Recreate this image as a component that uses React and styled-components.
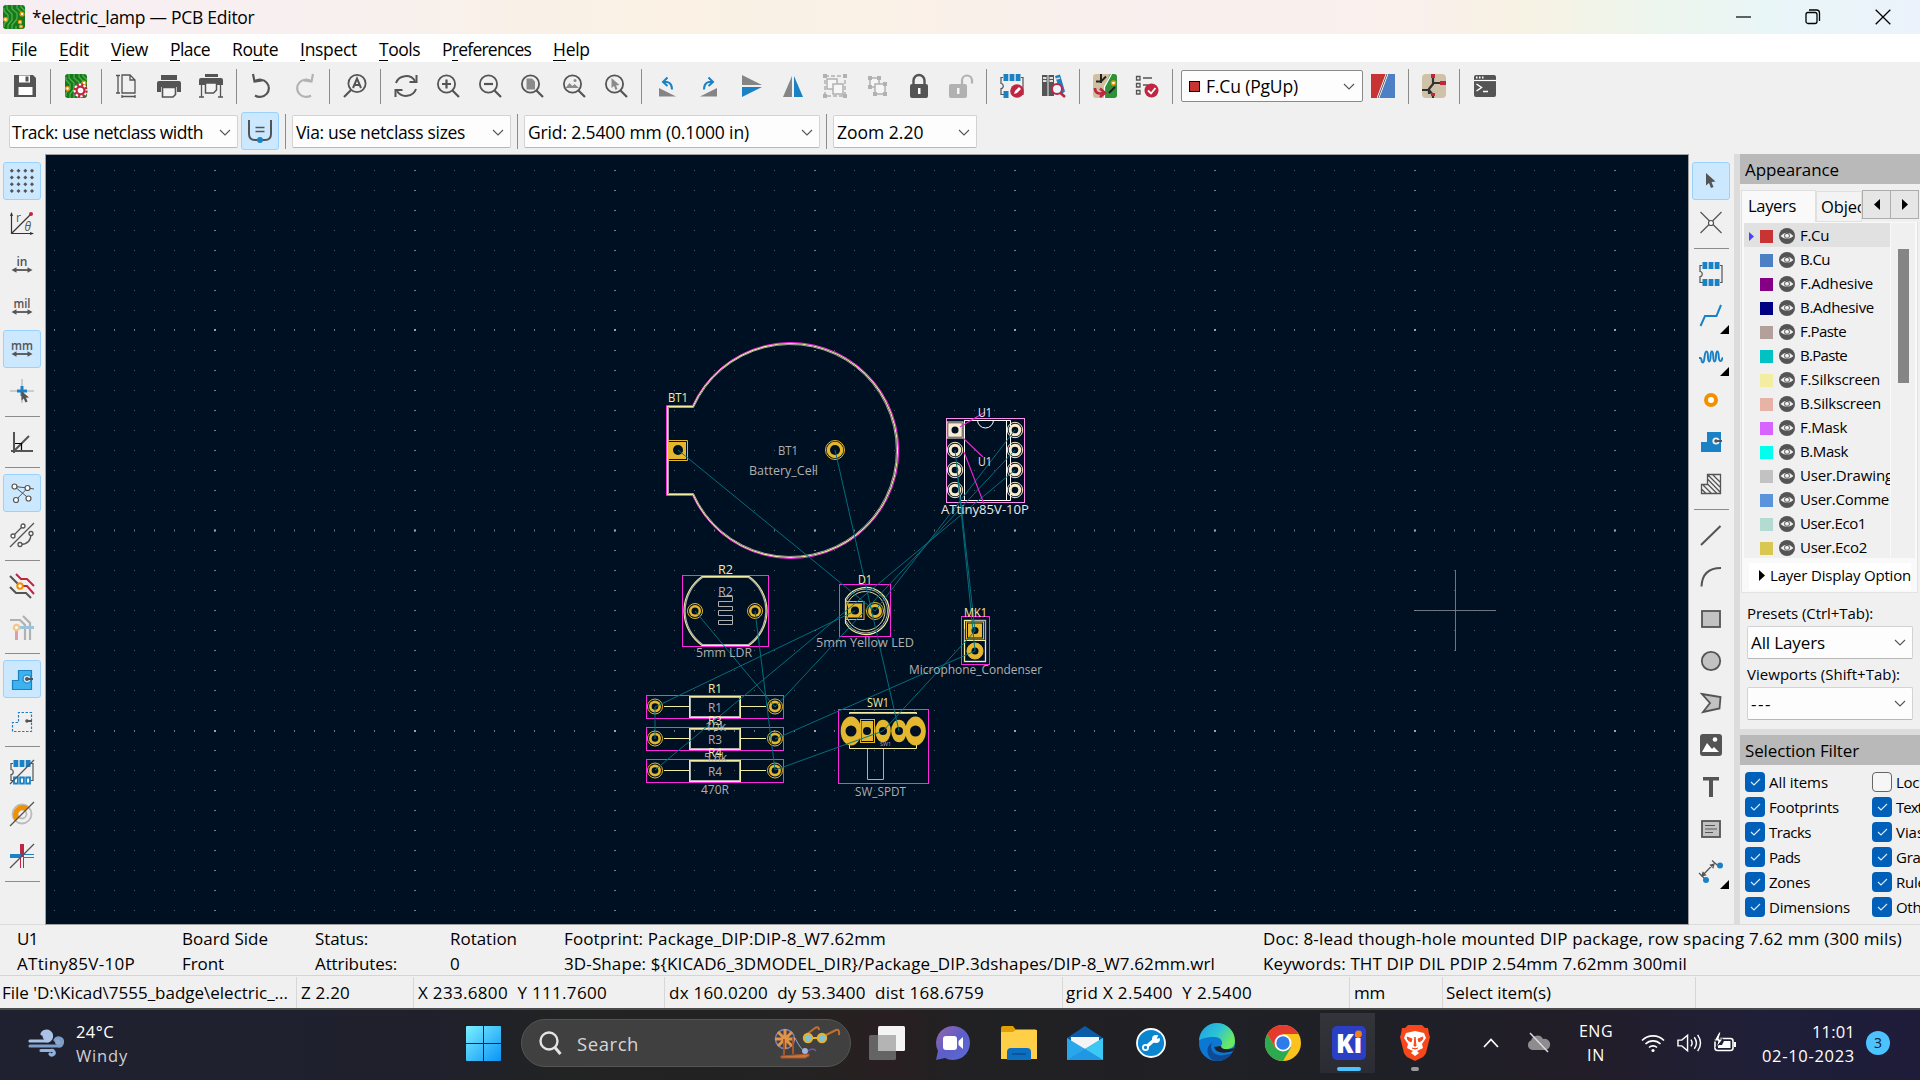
import React from "react";
import styled, { createGlobalStyle, css } from "styled-components";

const FONT = '"Open Sans", "Noto Sans", sans-serif';
const G = "#545454";
const B = "#1a81c4";
const R = "#bf2641";
const O = "#f29100";

const Global = createGlobalStyle`
  *, *::before, *::after { box-sizing: border-box; }
  body { margin: 0; overflow: hidden; background: #f0f0f0; font-family: ${FONT}; color: #000; }
  svg { flex: none; overflow: visible; }
`;

/* ---------- text fitted to a nominal width ---------- */
let ctx = null;
const spacingFor = (text, size, width) => {
  if (!width) return 0;
  if (!ctx) ctx = document.createElement("canvas").getContext("2d");
  ctx.font = `${size}px "Open Sans"`;
  return (width - ctx.measureText(text).width) / text.length;
};
const TextSpan = styled.span`
  font-size: ${(p) => p.$size}px;
  color: ${(p) => p.$color || "#000"};
  line-height: 1.3;
  white-space: pre;
  flex: none;
  u { text-decoration: none; box-shadow: 0 1px 0 currentColor; display: inline-block; line-height: 1.12; }
`;
const Text = ({ children, size = 17.5, w, color, mn }) => {
  const ls = spacingFor(children, size, w);
  return (
    <TextSpan $size={size} $color={color} style={{ letterSpacing: `${ls.toFixed(3)}px` }}>
      {mn === undefined ? children : (
        <>{children.slice(0, mn)}<u>{children[mn]}</u>{children.slice(mn + 1)}</>
      )}
    </TextSpan>
  );
};

/* ---------- frame ---------- */
const Screen = styled.div`
  width: 1920px; height: 1080px; display: flex; flex-direction: column; overflow: hidden;
`;
const TitleBar = styled.header`
  height: 34px; display: flex; align-items: center; flex: none;
  background: linear-gradient(90deg, #f6eef3 0, #f8f0ef 330px, #faf2e4 640px, #faf1e8 900px, #f9efee 1140px, #faf0ec 1420px, #f8f2e3 1510px, #edf5ec 1650px, #e9f6f8 1780px, #ebf2fb 1920px);
`;
const AppBadge = styled.div`width: 24px; height: 24px; margin: 0 6px 0 2px; display: flex;`;
const Caption = styled.div`flex: 1; display: flex;`;
const WindowButtons = styled.div`display: flex; margin-right: 2px;`;
const WindowButton = styled.div`width: 70px; height: 34px; display: grid; place-items: center;`;
const MenuBar = styled.nav`
  height: 28px; background: #fff; display: flex; align-items: center; gap: 22px; padding: 3px 0 0 11px; flex: none;
`;
const TopTools = styled.div`
  height: 48px; flex: none; display: flex; align-items: center; gap: 4px; padding-left: 6px;
`;
const SecondTools = styled.div`
  height: 44px; flex: none; display: flex; align-items: center; padding: 0 0 1px 9px;
`;
const WidthToggle = styled.div`margin: 0 4px 1px 3px; display: flex;`;
const ToolButton = styled.div`
  width: 38px; height: 38px; flex: none; display: grid; place-items: center; position: relative;
  border-radius: 3px; border: 1px solid transparent;
  & > svg { opacity: ${(p) => (p.$off ? 0.4 : 1)}; }
  ${(p) => p.$on && css`background: #cce8ff; border-color: #99d1ff;`}
  ${(p) => p.$more && css`&::after { content: ""; position: absolute; right: 0; bottom: 0;
    border-left: 9px solid transparent; border-bottom: 9px solid #000; }`}
`;
const Rule = styled.div`
  flex: none; display: grid; place-items: center;
  ${(p) => (p.$h ? "width: 35px; height: 5px;" : "width: 5px; height: 35px;")}
  &::after { content: ""; background: #8c8c8c; ${(p) => (p.$h ? "width: 35px; height: 1px;" : "width: 1px; height: 35px;")} }
`;
const Combo = styled.div`
  width: ${(p) => p.$w}px; height: ${(p) => p.$hgt || 33}px; margin: ${(p) => p.$m || "0"};
  flex: none; display: flex; align-items: center; justify-content: space-between;
  padding: ${(p) => p.$pt || 1}px ${(p) => p.$pr || 6}px 0 ${(p) => p.$pl || 3}px; background: #fdfdfd;
  border: 1px solid ${(p) => (p.$dark ? "#8a8a8a" : "#d3d3d3")};
  border-bottom-color: ${(p) => (p.$dark ? "#8a8a8a" : "#b8b8b8")}; border-radius: 2px;
`;
const ComboValue = styled.span`display: flex; align-items: center; gap: 7px; &>i { width: 9px; height: 9px; background: #c83434; outline: 1px solid #000; }`;
const Chevron = () => (
  <svg width="12" height="8" viewBox="0 0 12 8"><path d="M1 1l5 5 5-5" fill="none" stroke="#555" strokeWidth="1.1" /></svg>
);
const Main = styled.main`height: 771px; flex: none; display: flex;`;
const LeftTools = styled.aside`
  width: 45px; padding: 8px 1px 0 0; display: flex; flex-direction: column; align-items: center; gap: 4px;
  border-bottom: 1px solid #dcdcdc;
`;
const CanvasFrame = styled.section`width: 1644px; border: 1px solid #a0a0a0; background: #001023; & > svg { display: block; overflow: hidden; }`;
const Sash = styled.div`width: 6px; background: #dcdcdc;`;
const SidePanel = styled.aside`width: 180px; overflow: hidden; display: flex; flex-direction: column;`;
const PanelTitle = styled.div`
  height: 30px; flex: none; background: #b9b9b9; display: flex; align-items: center; padding: 2px 0 0 5px;
`;
const TabRow = styled.div`height: 38px; flex: none; display: flex; align-items: flex-start; padding: 6px 0 0 1px;`;
const Tab = styled.div`
  height: ${(p) => (p.$on ? 32 : 31)}px; margin-top: ${(p) => (p.$on ? 0 : 1)}px; width: ${(p) => p.$w}px;
  background: ${(p) => (p.$on ? "#f9f9f9" : "#f3f3f3")}; border: 1px solid #e0e0e0; border-bottom: ${(p) => (p.$on ? "none" : "1px solid #e0e0e0")};
  overflow: hidden; display: flex; align-items: center; padding: 0 0 ${(p) => (p.$on ? 1 : 0)}px ${(p) => (p.$on ? 6 : 4)}px;
`;
const TabArrow = styled.div`
  width: 29px; height: 29px; margin: 0 -1px 0 0; border: 1px solid #adadad; background: #e6e6e6; display: grid; place-items: center;
`;
const Page = styled.div`
  height: 371px; width: 177px; margin-left: 1px; flex: none; border: 1px solid #e3e3e3; border-top: 0; background: #f9f9f9; padding: 1px 2px 0 2px;
`;
const LayerArea = styled.div`display: flex; height: 335px; overflow: hidden; gap: 1px;`;
const LayerList = styled.div`width: 146px; background: #f0f0f0; overflow: hidden; flex: none;`;
const LayerRow = styled.div`
  height: 24px; display: grid; grid-template-columns: 16px 19px 21px auto; align-items: center; white-space: pre; padding-top: 2px;
  background: ${(p) => (p.$on ? "#e1e1e1" : "transparent")};
`;
const RowArrow = styled.svg`display: block; width: 16px; height: 9px;`;
const Swatch = styled.i`width: 13px; height: 13px; background: ${(p) => p.$c};`;
const ScrollTrack = styled.div`flex: 1; background: #f0f0f0; padding: 26px 0 0 7px;`;
const ScrollThumb = styled.div`width: 11px; height: 134px; background: #858585;`;
const DisplayOptions = styled.div`
  width: 162px; height: 27px; margin: 5px 0 0 5px; background: #fff; overflow: hidden; display: flex; align-items: center; padding: 0 0 2px 10px; gap: 5px;
`;
const FieldLabel = styled.div`height: ${(p) => p.$hgt}px; flex: none; display: flex; align-items: flex-end; padding: 0 0 1px 7px;`;
const PanelSash = styled.div`height: 6px; margin-top: 9px; flex: none; background: #dcdcdc;`;
const Filters = styled.div`
  display: grid; grid-template-columns: 127px 127px; grid-auto-rows: 25px; padding: 7px 0 0 5px; flex: 1; overflow: hidden; border-bottom: 1px solid #dcdcdc;
`;
const Check = styled.label`display: flex; align-items: flex-start; gap: 4px; height: 25px; & > span { margin-top: 1px; }`;
const Box = styled.i`
  width: 20px; height: 20px; border-radius: 4px; flex: none; display: grid; place-items: center;
  ${(p) => (p.$on ? "background: #005fb8;" : "background: #f6f6f6; border: 1px solid #666;")}
`;
const MessagePanel = styled.section`
  height: 51px; flex: none; display: grid; padding: 2px 0 0 17px; border-bottom: 1px solid #d5d5d5;
  grid-template-columns: 165px 133px 135px 114px 699px auto; grid-template-rows: 25px 25px; align-items: center;
`;
const StatusBar = styled.footer`height: 32px; flex: none; display: flex; padding-top: 1px;`;
const StatusCell = styled.div`
  width: ${(p) => p.$w}px; padding: 2px 0 0 ${(p) => p.$pl || 4}px; border-right: 1px solid #d7d7d7; display: flex; align-items: center;
`;

/* ---------- task bar ---------- */
const TaskBar = styled.footer`
  height: 72px; flex: none; display: flex; align-items: center; border-top: 2px solid #4a4a4b; padding-bottom: 4px;
  background: linear-gradient(90deg, #1f2130 0, #1f202c 430px, #222323 560px, #242222 800px, #281f21 890px, #212123 960px, #1f2027 1400px, #221d28 1580px, #1f1f38 1760px, #1e1c3a 1920px);
`;
const Weather = styled.div`width: 466px; display: flex; align-items: center; gap: 12px; padding-left: 28px;`;
const Stack = styled.div`display: flex; flex-direction: column; align-items: ${(p) => p.$a || "flex-start"}; gap: ${(p) => p.$gap || 2.5}px; padding-top: 1px;`;
const SearchBox = styled.div`
  width: 330px; height: 48px; margin: 0 3px 0 20px; border-radius: 24px; background: #404041; border: 1px solid #555;
  display: flex; align-items: center; padding: 0 9px 0 16px; gap: 16px;
`;
const SearchLabel = styled.div`flex: 1; display: flex; padding: 2px 0 0 0; margin-left: -1px;`;
const TaskCell = styled.div`width: 66px; height: 60px; display: grid; place-items: center; position: relative;
  ${(p) => p.$on && css`background: linear-gradient(#34343b, #2b2c33) 4px 0 / 55px 60px no-repeat; border-radius: 6px;`}
  ${(p) => p.$mark && css`&::after { content: ""; position: absolute; bottom: 2px; left: 50%; transform: translateX(-50%);
    width: ${p.$mark === "wide" ? 24 : 8}px; height: 4px; border-radius: 2px; background: ${p.$mark === "wide" ? "#4cc2ff" : "#9a9a9c"}; }`}
`;
const Tray = styled.div`display: flex; align-items: center; padding-left: 19px;`;
const TrayCell = styled.div`width: ${(p) => p.$w}px; display: flex; justify-content: ${(p) => p.$j || "center"};`;
const Badge = styled.div`
  width: 24px; height: 24px; margin-left: 11px; border-radius: 50%; background: #4cc2ff; display: grid; place-items: center;
`;

/* ---------- icons ---------- */
const Ic = ({ children, s = 24, ...rest }) => (
  <svg width={s} height={s} viewBox="0 0 24 24" fill="none" stroke={G} strokeWidth="1.8" {...rest}>{children}</svg>
);
const Board = ({ gear }) => (
  <Ic stroke="none">
    <rect x="1" width="22" height="24" rx="3" fill="#157a1c" />
    <g stroke="#4fb04b" strokeWidth="1.3" fill="none">
      <path d="M2 22v-3l4-4v-5l-4-4V3M6 24v-4l4-5V9L5 4V0M10 24v-4l5-6V8l-5-4V0M14 24v-3M15 0v3l5 5M19 0v2l4 4" />
    </g>
    <g fill="#fff" stroke={O} strokeWidth="1.4"><circle cx="3.500" cy="14.500" r="1.900" /><circle cx="20" cy="9" r="1.900" />{!gear && <><circle cx="18" cy="17" r="1.600" /><circle cx="19" cy="21.500" r="1.400" /></>}</g>
    {gear && (
      <g>
        <circle cx="16.500" cy="16.500" r="6.200" fill="#fff" stroke="#fff" />
        <circle cx="16.500" cy="16.500" r="6" fill="none" stroke={R} strokeWidth="2.400" strokeDasharray="2.356" />
        <circle cx="16.500" cy="16.500" r="3.900" fill="#fff" stroke={R} strokeWidth="2.200" />
      </g>
    )}
  </Ic>
);
const Lens = ({ children }) => (
  <Ic><circle cx="10.500" cy="10" r="8.600" /><path d="M16.500 16.500L23 23" strokeWidth="2.200" />{children}</Ic>
);
const Chip = ({ children }) => (
  <Ic>
    <path d="M3 3.500H1v6c3 0 3 5 0 5v6h3M21 3.500h2v17h-2" strokeWidth="1.200" />
    <g fill={B} stroke="none"><path d="M3.500 0h4.800v7H3.500zM9.600 0h4.800v7H9.600zM15.700 0h4.800v7h-4.800z" />{children}</g>
  </Ic>
);
const Pins = () => <path d="M3.500 17h4.800v7H3.500zM9.600 17h4.800v7H9.600zM15.700 17h4.800v7h-4.800z" />;
const UnitIcon = ({ t, w }) => (
  <Ic stroke="none">
    <text x="12" y="12.500" fill={G} fontFamily="Open Sans" fontSize="13" fontWeight="600" textAnchor="middle" textLength={w} lengthAdjust="spacingAndGlyphs">{t}</text>
    <path d="M1.500 17l5-2.800v5.600zM22.500 17l-5-2.800v5.600z" fill={G} /><path d="M5 17h14" stroke={G} strokeWidth="1.800" />
  </Ic>
);

const ico = {
  save: <Ic stroke="none"><path fill={G} d="M1 1h19l3 3v19H1z" /><path fill="#fff" d="M6 1.500h11v7H6zM5.500 13h14v8h-14z" /><path fill={G} d="M12.500 2.500h3v5h-3z" /></Ic>,
  page: <Ic strokeWidth="1.300"><path d="M7 1h8l5 5v13H7zM15 1v5h5" /><path d="M1 1.500h4M1 19h4M3 1.500V19M7 21v3M20 21v3M7 22.500h13" /></Ic>,
  print: <Ic stroke="none"><path fill={G} d="M4 1h16v5H4zM2 7h20a2 2 0 0 1 2 2v9h-4v-5H4v5H0V9a2 2 0 0 1 2-2z" /><path d="M5.500 13.500h13v7l-2.500 2.500h-10.500z" fill="#f4f4f4" stroke={G} strokeWidth="1.600" /></Ic>,
  plot: <Ic stroke="none"><path fill={G} d="M6 0h13v3H6zM2 4h20a2 2 0 0 1 2 2v5H0V6a2 2 0 0 1 2-2z" /><path d="M6.500 9v10h8l3-3V9z" fill="#f4f4f4" stroke={G} strokeWidth="1.500" /><path d="M2.500 11v12M21.500 11v12M0 23h5M19 23h5" stroke={G} strokeWidth="1.300" /></Ic>,
  undo: <Ic strokeWidth="2.200"><path d="M3 0l1.500 7.500L12 6.500M5 7a9 8.600 0 1 1 0 14.500" /></Ic>,
  redo: <Ic strokeWidth="2.200"><path d="M21 0l-1.500 7.500L12 6.500M19 7a9 8.600 0 1 0 0 14.500" /></Ic>,
  find: <Ic><circle cx="14" cy="9.500" r="8.600" /><path d="M8 16L1 23" strokeWidth="2.200" /><path d="M10 14l4-9.500L18 14M11.500 11h5" strokeWidth="2" /></Ic>,
  refresh: <Ic strokeWidth="2"><path d="M2 9a10.500 10 0 0 1 19-2M22 15a10.500 10 0 0 1-19 2" /><path d="M22.500 1v7h-7M1.500 23v-7h7" /></Ic>,
  zin: <Lens><path d="M10.500 5.500v9M6 10h9" strokeWidth="2.200" /></Lens>,
  zout: <Lens><path d="M6 10h9" strokeWidth="2.200" /></Lens>,
  zfit: <Lens><path d="M6.500 4.500h5.500l3 3v8h-8.500z" fill="#8b8b8b" stroke="none" /></Lens>,
  zobj: <Lens><path d="M3.500 14l4-5 3 3 2-2 4.500 4z" fill="#8b8b8b" stroke="none" /><circle cx="13" cy="6.500" r="1.500" fill="#8b8b8b" stroke="none" /></Lens>,
  zsel: <Lens><path d="M7.500 4v10l2.500-2 1.500 4 2-1-1.500-3.500 3.500-.5z" fill="#8b8b8b" stroke="none" /></Lens>,
  ccw: <Ic><path d="M4 14v8.500h17z" fill="#858585" stroke="none" /><path d="M8 8c6-1 9 2 9 7.500M12.500 3.500L8 8l4.500 4" stroke={B} strokeWidth="2" /></Ic>,
  cw: <Ic><path d="M20 14v8.500H3z" fill="#858585" stroke="none" /><path d="M16 8c-6-1-9 2-9 7.500M11.500 3.500L16 8l-4.500 4" stroke={B} strokeWidth="2" /></Ic>,
  flv: <Ic stroke="none"><path d="M3 1l20 10H3z" fill="#858585" /><path d="M3 23l20-10H3z" fill={B} /></Ic>,
  mir: <Ic stroke="none"><path d="M2 23L11 2v21z" fill="#858585" /><path d="M22 23L13 2v21z" fill={B} /></Ic>,
  group: <Ic strokeWidth="1.500"><path d="M2 2h20v20H2z" strokeDasharray="4 2" /><path d="M4 5h10v10H4z" fill="#fff" /><path d="M10 10h10v10H10z" fill="#fff" /><path d="M0 0h4v4H0zM20 0h4v4h-4zM0 20h4v4H0zM20 20h4v4h-4z" fill={G} stroke="none" /></Ic>,
  ungroup: <Ic strokeWidth="1.500"><path d="M5 4h9v9H5z" fill="#fff" /><path d="M10 10h10v10H10z" fill="#fff" /><path d="M3 2h4v4H3zM12 2h4v4h-4zM3 11h4v4H3zM8 18h4v4H8zM18 18h4v4h-4zM18 8h4v4h-4z" fill={G} stroke="none" /></Ic>,
  lock: <Ic><rect x="3" y="10" width="18" height="14" rx="2" fill={G} stroke="none" /><path d="M6.500 10V6.500a5.500 5.500 0 0 1 11 0V10" strokeWidth="2.400" /><path d="M11 14h2.500v6H11z" fill="#fff" stroke="none" /></Ic>,
  unlock: <Ic><rect x="0" y="10" width="18" height="14" rx="2" fill={G} stroke="none" /><path d="M13 10V6.500a5 5 0 0 1 10 0v3" strokeWidth="2.200" /><path d="M8 14h2.500v6H8z" fill="#fff" stroke="none" /></Ic>,
  fped: <Chip><path d="M3.500 17h5v7h-5z" /><circle cx="17" cy="17" r="6.800" fill={R} /><path d="M14 20l1-3 4-4 2 2-4 4z" fill="#fff" /></Chip>,
  lib: <Ic stroke="none"><path d="M0 1h5.500v21H0zM6.500 1H12v21H6.500z" fill={G} /><path d="M13 2l5-1.500 5 17-4 3z" fill={B} /><path d="M1 4h3.500M1 7h3.500M7.500 4H11M7.500 7H11M14 5l4-1" stroke="#ddd" /><circle cx="15" cy="15" r="5" fill="#e6f4fc" stroke={R} strokeWidth="2" /><path d="M18.500 19l4.500 4" stroke={R} strokeWidth="2.600" /></Ic>,
  upd: <Ic stroke="none"><rect width="24" height="24" rx="3" fill="#cfc09f" /><path d="M17 0h4q3 0 3 3v18q0 3-3 3h-9V12z" fill="#2f9238" /><path d="M18.500 0l-7 13v11" stroke="#fff" strokeWidth="1.200" /><path d="M8 0v9M3 7.500h5l5-5M16 19l6-6" stroke="#222" strokeWidth="2" /><circle cx="20.500" cy="9" r="2" fill="#fff" stroke={O} strokeWidth="1.400" /><path d="M2 14c0 5 3 6.500 8 5M7 14.500l5 4.500-5 4" stroke={R} strokeWidth="2.600" /></Ic>,
  drc: <Ic><path d="M1.500 2.500h3.500v3.500H1.500zM1.500 9.500h3.500v3.500H1.500zM1.500 16.500h3.500v3.500H1.500zM8 4h9M8 11h5" strokeWidth="1.300" /><circle cx="16.500" cy="16.500" r="7" fill={R} stroke="none" /><path d="M13 16.500l3 3 4.500-5.500" stroke="#fff" /></Ic>,
  pair: <Ic stroke="none"><path d="M0 0h15L6 24H0z" fill="#c83434" /><path d="M17 0h7v24H8z" fill="#4d7fc4" /><path d="M16 0L7 24" stroke="#fff" strokeWidth="2.400" /><path d="M16 0L7 24" stroke="#333" strokeWidth=".8" /></Ic>,
  sch: <Ic stroke="none"><rect width="24" height="24" rx="4" fill="#cfc2a6" /><path d="M11 4v6l-4 5v5M0 16h7l4 5v3M11 9h9" stroke="#333" strokeWidth="2.200" /><path d="M9 0h4v4H9zM18 7h6v4h-6zM9 19h4v3H9z" fill={R} /></Ic>,
  con: <Ic stroke="none"><rect x="1" y="1" width="22" height="22" rx="2" fill={G} /><path d="M1 6.500h22" stroke="#fff" strokeWidth="1.200" /><path d="M3 3.500h1.500M6 3.500h1.500M9 3.500h1.500" stroke="#fff" /><path d="M3.500 10l5 3.500-5 3.500M10 17.500h5" stroke="#fff" strokeWidth="1.500" /></Ic>,
  width: <Ic><path d="M1 1v14q0 6 6 6h10q6 0 6-6V1" strokeWidth="2" /><path d="M7.500 8.500h9M7.500 12.500h9" strokeWidth="1.500" /><circle cx="12" cy="21" r="3" fill={B} stroke="none" /></Ic>,
  grid: <Ic stroke="none">{[1.800, 8.500, 15.300, 22].map((x) => [1.800, 8.500, 15.300, 22].map((y) => <path key={x + "-" + y} d={`M${x - 2} ${y}l2-2 2 2-2 2z`} fill={G} />))}</Ic>,
  polar: <Ic strokeWidth="1.200" stroke="#333"><path d="M1.500 2v20.500H23M1.500 22.500L21 3" /><path d="M0 5l1.500-4L3 5zM20 21l4 1.500-4 1.500z" fill="#333" stroke="none" /><circle cx="21" cy="3" r="2" fill={R} stroke="none" /><text x="6" y="11" fontFamily="Open Sans" fontSize="12" fill={G} stroke="none">r</text><text x="14.500" y="19.500" fontFamily="Open Sans" fontSize="12" fontStyle="italic" fill={G} stroke="none">θ</text></Ic>,
  cursor: <Ic stroke="none"><path d="M12 0v24M0 12h24" stroke="#a8a8a8" strokeWidth="1" /><path d="M12 7v10M7 12h10" stroke={B} strokeWidth="3" /><path d="M11.500 12v9.500l2.300-2 1.600 4 2.200-1-1.600-3.700 3-.4z" fill={G} /></Ic>,
  angle: <Ic strokeWidth="2"><path d="M4 2v21M1 21h22M3 22L19 6" /><path d="M5 13.500h6.500V20" strokeWidth="1.200" stroke="#000" /></Ic>,
  rats: <Ic strokeWidth="1"><path d="M4.500 5.500L18 7l6 1M4.500 5.500L19 17.500M17.500 7L6 19" /><g fill="#fff" strokeWidth="1.200"><circle cx="4.500" cy="5.500" r="2.500" /><circle cx="17.500" cy="7" r="2.500" /><circle cx="6" cy="19" r="2.500" /><circle cx="18.500" cy="17.500" r="2.500" /></g></Ic>,
  rats2: <Ic strokeWidth="1.300"><path d="M0 24L24 0M3 13l10-10M10 21.500c8 0 11-4 11-11" /><g fill="#fff"><circle cx="3" cy="13" r="2" /><circle cx="13" cy="3" r="2" /><circle cx="10" cy="21.500" r="2" /><circle cx="21" cy="10.500" r="2" /></g></Ic>,
  nets: <Ic strokeWidth="2"><path d="M0 2l10 10M0 13l6 6h10l5 5" /><path d="M6 0l5 5h6l7 7M10 12h7l7 8" stroke={R} /><circle cx="10" cy="12" r="2.700" fill="#fff" stroke={O} /></Ic>,
  hc: <Ic strokeWidth="2.200"><path d="M0 4h10l5 5v15M13 0l7 7v17" /><path d="M9 11.500h15" stroke={B} strokeWidth="3" /><path d="M6.500 14v10" stroke={R} strokeWidth="3" /><circle cx="6.500" cy="11.500" r="2.700" fill="#fff" stroke={O} /></Ic>,
  zone: <Ic strokeWidth="1.200"><path d="M2.500 22.500v-9h6v-10h13V22.500z" fill="#3cb3ee" stroke={B} /><circle cx="17" cy="12" r="4" fill="#cce8ff" stroke={B} /><path d="M17 12h6" strokeWidth="2" /><circle cx="17" cy="12" r="2" fill={G} stroke="none" /></Ic>,
  zoneOut: <Ic strokeWidth="1.200"><path d="M2.500 22.500v-9h6v-10h13V22.500z" stroke={B} strokeDasharray="2.500 1.500" /><path d="M17 12h5" strokeWidth="2" /><circle cx="17" cy="12" r="1.800" fill={G} stroke="none" /></Ic>,
  padOut: <Chip><path d="M4 17.500h3.800v6H4zM10.100 17.500h3.800v6h-3.800zM16.200 17.500H20v6h-3.800z" fill="#fff" stroke={B} /><path d="M0 24L24 0" stroke={G} strokeWidth="1.300" /></Chip>,
  viaOut: <Ic stroke="none"><circle cx="12" cy="12" r="9.500" stroke="#bbb" /><circle cx="12" cy="12" r="4.500" stroke="#bbb" /><path d="M5 19A10 10 0 0 1 19 5l-4 4a4.300 4.300 0 0 0-6 6z" fill={O} /><path d="M0 24L24 0" stroke={G} strokeWidth="1.300" /></Ic>,
  trkOut: <Ic><path d="M12 0v13" stroke={R} strokeWidth="4" /><path d="M10.500 13v11M13.500 13v11" stroke={R} strokeWidth="1" /><path d="M0 12h11" stroke={B} strokeWidth="4" /><path d="M13 10.500h11M13 13.500h11" stroke={B} strokeWidth="1" /><path d="M0 24L24 0" strokeWidth="1.300" /></Ic>,
  arrow: <Ic stroke="none"><path d="M7 4v12.500l3-2.500 2 5 2.500-1-2-5 4-.5z" fill={G} /></Ic>,
  local: <Ic strokeWidth="1.200"><path d="M1.500 1l21 21M22.500 1l-21 21" /><circle cx="12" cy="12" r="2.500" fill="#fff" /></Ic>,
  fp: <Chip><Pins /></Chip>,
  route: <Ic stroke={B} strokeWidth="2"><path d="M1.500 22L6 12h11.500L22 1" /></Ic>,
  tune: <Ic stroke={B} strokeWidth="2"><path d="M0 12h1.500c1.500 0 .5 4.500 2.500 4.500s1-11 3.500-11 .5 10 2.700 10 .5-10 2.700-10 .5 10 2.700 10 .5-10 2.700-10 .5 9.500 3 9.500 1-3 2.700-3" /></Ic>,
  via: <Ic stroke={O} strokeWidth="4"><circle cx="12" cy="12" r="5" fill="#fff" /></Ic>,
  zoneFill: <Ic stroke="none"><path d="M2 22V12h6V2h14v20z" fill={B} /><circle cx="17" cy="11" r="3.600" fill="#f0f0f0" /><path d="M17 11h6" stroke={G} strokeWidth="2" /><circle cx="17" cy="11" r="1.800" fill={G} /></Ic>,
  keep: <Ic strokeWidth="1.300"><path d="M2.500 21.500v-9h6v-10h13v19zM2.500 17l4.500 4.500M4 13l8.500 8.500M8.500 12l9.500 9.500M8.500 7l13 13.500M9 3l12.500 12.500M14 3l7.500 7.500" /></Ic>,
  line: <Ic strokeWidth="2"><path d="M2 22L21.500 3" /></Ic>,
  arc: <Ic strokeWidth="2"><path d="M2.500 21.500C3 9 10 3 22 3" /></Ic>,
  rect: <Ic><rect x="3" y="4" width="18" height="16" fill="#c2c2c2" /></Ic>,
  circ: <Ic><circle cx="12" cy="12" r="9.200" fill="#c2c2c2" /></Ic>,
  poly: <Ic><path d="M3 3l18.500 3-1 11.500L4 21l7-9z" fill="#c2c2c2" /></Ic>,
  img: <Ic stroke="none"><rect x="1" y="1" width="22" height="22" rx="3" fill={G} /><path d="M3 19l5-9 5 6 2-2 5 5z" fill="#fff" /><circle cx="16" cy="6.500" r="2.300" fill="#fff" /></Ic>,
  text: <Ic stroke="none"><path d="M4 2h16v3.500h-6V22h-4V5.500H4z" fill={G} /></Ic>,
  tbox: <Ic><rect x="3" y="4" width="18" height="16" fill="#c2c2c2" /><path d="M6 8.500h10M6 12h12M6 15.500h8" strokeWidth="1.200" /></Ic>,
  dim: <Ic strokeWidth="1.200"><path d="M3.500 16.500L14.500 5M0 14l7 7M13 1.500l8 7M3 17l3.500-1-2.500-2.500zM15 5l-3.500 1L14 8.500z" /><circle cx="7" cy="21" r="3" fill={B} stroke="none" /><circle cx="21" cy="6.500" r="3" fill={B} stroke="none" /></Ic>,
};

const Tools = ({ items, h }) => items.map((it, i) => {
  if (it === "|") return <Rule key={i} $h={h} />;
  const [name, flag] = it.split(":");
  return <ToolButton key={i} $on={flag === "on"} $off={flag === "off"} $more={flag === "more"}>{ico[name]}</ToolButton>;
});

/* ---------- board ---------- */
const Y = "#f2eda1", M = "#ff26e2", GR = "#afafaf", GD = "#e3b72e", RAT = "#007480", NAVY = "#001023";
const Label = ({ x0, x1, y, c = GR, children, size = 12.5 }) => (
  <text x={x0} y={y + size * 0.36} fill={c} fontSize={size} fontFamily='"Open Sans", sans-serif' textLength={x1 - x0} lengthAdjust="spacingAndGlyphs">{children}</text>
);
const Pad = ({ x, y, r = 7.2, o = 9.3, hole = 4, c = GD, sq }) => (
  <g>
    {sq
      ? <><rect x={x - o + 0.5} y={y - o + 0.5} width={2 * o - 1} height={2 * o - 1} fill="none" stroke={c} /><rect x={x - r} y={y - r} width={2 * r} height={2 * r} fill={c} /></>
      : <><circle cx={x} cy={y} r={o - 0.5} fill="none" stroke={c} /><circle cx={x} cy={y} r={r} fill={c} /></>}
    <circle cx={x} cy={y} r={hole} fill={NAVY} />
  </g>
);
const Court = ({ x, y, x2, y2, c = M }) => <rect x={x} y={y} width={x2 - x} height={y2 - y} fill="none" stroke={c} />;
const Resistor = ({ y }) => (
  <g>
    <Court x={646.5} y={y - 11} x2={783.500} y2={y + 12} />
    <path d={`M664 ${y}H690M741 ${y}H766`} stroke={Y} />
    <rect x="690.500" y={y - 9} width="49" height="19" fill="none" stroke={GR} />
    <rect x="689.500" y={y - 10} width="51" height="21" fill="none" stroke={Y} />
    <Pad x={655} y={y} r={6} o={8} hole={3.300} /><Pad x={775} y={y} r={6} o={8} hole={3.300} />
  </g>
);
const rats = [
  [678, 450, 875, 611], [835, 450, 899, 731], [955, 450, 975, 631], [957, 470, 975, 651],
  [1015, 430, 875, 611], [1015, 450, 775, 707], [1015, 470, 655, 770], [855, 611, 655, 707], [655, 707, 655, 739],
  [775, 739, 975, 651], [775, 770, 883, 731], [883, 731, 975, 631], [695, 611, 775, 707], [755, 611, 775, 770],
];
const BoardView = () => (
  <svg width="1642" height="769" viewBox="46 155 1642 769">
    <defs>
      <pattern id="dots" x="54" y="170" width="20" height="20" patternUnits="userSpaceOnUse"><rect width="1" height="1" fill="#505a63" /></pattern>
      <pattern id="rows" x="54" y="329" width="20" height="200.500" patternUnits="userSpaceOnUse"><rect y="0" width="1" height="2" fill="#737b81" /></pattern>
      <pattern id="cols" x="214" y="170" width="200" height="20" patternUnits="userSpaceOnUse"><rect width="2" height="1" fill="#7a8287" /></pattern>
      <pattern id="major" x="214" y="329" width="200" height="200.500" patternUnits="userSpaceOnUse"><rect width="2" height="2" fill="#9da2a5" /></pattern>
    </defs>
    {["dots", "rows", "cols", "major"].map((p) => <rect key={p} x="46" y="155" width="1642" height="769" fill={`url(#${p})`} />)}

    <path d="M692.500 405.500H666.500V495.500H692.500A108 108 0 1 0 692.500 405.500Z" fill="none" stroke={M} />
    <path d="M693 406.500H667.500V494.500H693A107 107 0 1 0 693 406.500Z" fill="none" stroke={Y} strokeWidth="1.100" />
    <path d="M693.500 407.500H668.500V493.500H693.500A106 106 0 1 0 693.500 407.500Z" fill="none" stroke="#b4b3ac" strokeWidth=".9" />
    <path d="M668.500 440.500H687.500V460.500H668.500" fill="none" stroke={GD} /><rect x="668" y="442" width="18" height="17" fill={GD} /><circle cx="678" cy="450" r="5" fill={NAVY} />
    <Pad x={835} y={450} r={8.300} o={10} hole={5} />

    <Court x={946.500} y={418.500} x2={1024.500} y2={502.500} c="#ff8cf0" />
    <path d="M964.500 420.500H1010.500V500.500H960.500V495M964.500 420v80M1006.500 420v80" fill="none" stroke="#fff" />
    <path d="M977.500 420a8 8 0 0 0 16 0" fill="none" stroke="#fff" />
    <Pad sq x={955} y={430} r={6.800} o={8.500} hole={3.500} c="#faecd0" />
    {[450, 470, 490].map((y) => <Pad key={y} x={955} y={y} r={6.300} o={8.200} hole={3.300} c="#f8ebcb" />)}
    {[430, 450, 470, 490].map((y) => <Pad key={y} x={1015} y={y} r={6.300} o={8.200} hole={3.300} c="#f8ebcb" />)}

    <Court x={682.500} y={575.500} x2={768.500} y2={646.500} />
    <path d="M702.500 577.500H748.500A41 41 0 0 1 748.500 644.500H702.500A41 41 0 0 1 702.500 577.500Z" fill="none" stroke={GR} strokeWidth="1.200" />
    <path d="M702 576.500H749A42 42 0 0 1 749 645.500H702A42 42 0 0 1 702 576.500Z" fill="none" stroke={Y} strokeWidth="1.100" />
    <path d="M718.500 596.500H732.500V601.500H718.500V606.500H732.500V610.500H718.500V615.500H732.500V620.500H718.500V624.500H732.500V620" fill="none" stroke={GR} />
    <Pad x={695} y={611} r={6} o={8} hole={3.500} /><Pad x={755} y={611} r={6} o={8} hole={3.500} />

    <Court x={839.500} y={584.500} x2={890.500} y2={636.500} />
    <path d="M845.500 599A23.500 23.500 0 1 1 845.500 623Z" fill="none" stroke={Y} strokeWidth="1.200" />
    <path d="M846 601A22 22 0 1 1 846 621" fill="none" stroke={GR} />
    <circle cx="865.500" cy="611" r="19.500" fill="none" stroke={Y} strokeWidth=".9" />
    <Pad sq x={855} y={610.500} r={7} o={9.500} hole={4} /><Pad x={875} y={611} r={7} o={9} hole={4} />

    <Court x={961.500} y={616.500} x2={989.500} y2={664.500} />
    <path d="M964.500 620.500H985.500V661.500H964.500z" fill="none" stroke={GR} strokeWidth="1.400" /><path d="M964.500 629V620.500H972M964.500 640.500H985.500V661.500H964.500z" fill="none" stroke={Y} />
    <Pad sq x={975} y={630.500} r={7} o={9} hole={3.500} /><Pad x={975} y={651} r={8} o={8.500} hole={3.500} />

    <Resistor y={706.500} /><Resistor y={738.500} /><Resistor y={770.500} />

    <Court x={838.500} y={709.500} x2={928.500} y2={783.500} />
    <path d="M849.500 714V712.500H916.500V714M849.500 745V748.500H916.500V745" fill="none" stroke={Y} />
    <path d="M850 713.500H916M867.500 749V779.500H883.500V749" fill="none" stroke={GR} />
    {[[851, 10.300, 14.500, 5.500], [883, 7.800, 11.200, 4], [899, 7.800, 11.200, 4], [915.500, 10.300, 14.500, 5.500]].map(([x, rx, ry, h]) => (
      <g key={x}><ellipse cx={x} cy="731" rx={rx} ry={ry} fill={GD} /><circle cx={x} cy="731" r={h} fill={NAVY} /></g>
    ))}
    <rect x="860.500" y="719.500" width="14" height="23" fill="none" stroke={GD} /><rect x="861.500" y="721" width="11.500" height="20" fill={GD} /><circle cx="867" cy="731" r="4" fill={NAVY} />

    <g stroke={RAT} strokeWidth="1" opacity=".95">{rats.map((l, i) => <line key={i} x1={l[0]} y1={l[1]} x2={l[2]} y2={l[3]} />)}</g>
    <path d="M985 412L960 427M963 438L983 457M964 452L984 504" stroke="#f024d6" fill="none" strokeWidth="1.100" />

    <Label x0={668} x1={688} y={397.500} c={Y}>BT1</Label><Label x0={778} x1={798} y={450.500}>BT1</Label>
    <Label x0={749} x1={818} y={470.500}>Battery_Cell</Label>
    <Label x0={978} x1={992} y={412} c="#f4f4f4">U1</Label><Label x0={978} x1={992} y={461} c="#e8e8e8">U1</Label>
    <Label x0={941} x1={1029} y={509} c="#e8e8e8">ATtiny85V-10P</Label>
    <Label x0={718} x1={733} y={569.500} c={Y}>R2</Label><Label x0={718} x1={733} y={591}>R2</Label><Label x0={696} x1={752} y={652}>5mm LDR</Label>
    <Label x0={858} x1={872} y={579.500} c={Y}>D1</Label><Label x0={816} x1={914} y={642}>5mm Yellow LED</Label>
    <Label x0={964} x1={987} y={612} c={Y}>MK1</Label><Label x0={909} x1={1042} y={669.500}>Microphone_Condenser</Label>
    <Label x0={708} x1={722} y={688} c={Y}>R1</Label><Label x0={708} x1={722} y={707}>R1</Label>
    <Label x0={708} x1={722} y={720} c={Y}>R3</Label><Label x0={705} x1={726} y={726}>10k</Label><Label x0={708} x1={722} y={739}>R3</Label>
    <Label x0={708} x1={722} y={752} c={Y}>R4</Label><Label x0={704} x1={727} y={757.500}>5.6k</Label><Label x0={708} x1={722} y={771}>R4</Label>
    <Label x0={701} x1={729} y={789.500}>470R</Label>
    <Label x0={867} x1={889} y={702.500} c={Y}>SW1</Label><Label x0={880} x1={891} y={744} size={6}>SW1</Label><Label x0={855} x1={906} y={791}>SW_SPDT</Label>

    <path d="M1415 610.500H1496M1455.500 570V651" stroke="#8a8f95" strokeWidth="1" opacity=".8" />
  </svg>
);

const layers = [
  ["F.Cu", "#c83434", 29], ["B.Cu", "#4d7fc4", 30], ["F.Adhesive", "#840084", 73], ["B.Adhesive", "#000084", 74], ["F.Paste", "#b4a09a", 46],
  ["B.Paste", "#00c2c2", 47], ["F.Silkscreen", "#f2eda1", 80], ["B.Silkscreen", "#e8b2a7", 81], ["F.Mask", "#d864ff", 47], ["B.Mask", "#02ffee", 48],
  ["User.Drawings", "#c2c2c2", 100], ["User.Comments", "#5994dc", 110], ["User.Eco1", "#b4dbd2", 66], ["User.Eco2", "#d8c852", 67],
];
const Eye = () => (
  <svg width="16" height="16" viewBox="0 0 16 16"><circle cx="8" cy="8" r="8" fill={G} /><path d="M1.500 8Q8 1.500 14.500 8Q8 14 1.500 8z" fill="#f0f0f0" /><circle cx="8" cy="7.800" r="2.500" fill="none" stroke={G} strokeWidth="1" /></svg>
);
const filters = [
  ["All items", 59, 1], ["Locked items", 88, 0], ["Footprints", 70, 1], ["Text", 26, 1], ["Tracks", 42, 1], ["Vias", 28, 1],
  ["Pads", 31, 1], ["Graphics", 60, 1], ["Zones", 41, 1], ["Rule Areas", 72, 1], ["Dimensions", 81, 1], ["Other items", 80, 1],
];
const message = [
  ["U1", 21], ["Board Side", 86], ["Status:", 53], ["Rotation", 67], ["Footprint: Package_DIP:DIP-8_W7.62mm", 322],
  ["Doc: 8-lead though-hole mounted DIP package, row spacing 7.62 mm (300 mils)", 639],
  ["ATtiny85V-10P", 118], ["Front", 42], ["Attributes:", 82], ["0", 9],
  ["3D-Shape: ${KICAD6_3DMODEL_DIR}/Package_DIP.3dshapes/DIP-8_W7.62mm.wrl", 651],
  ["Keywords: THT DIP DIL PDIP 2.54mm 7.62mm 300mil", 424],
];
const status = [
  [297, 2, "File 'D:\\Kicad\\7555_badge\\electric_...", 286], [117, 4, "Z 2.20", 49], [251, 4, "X 233.6800  Y 111.7600", 189],
  [398, 4, "dx 160.0200  dy 53.3400  dist 168.6759", 315], [287, 3, "grid X 2.5400  Y 2.5400", 186], [93, 4, "mm", 31], [253, 3, "Select item(s)", 105],
];
const menus = [["File", 0, 26], ["Edit", 0, 30], ["View", 0, 37], ["Place", 0, 40], ["Route", 2, 46], ["Inspect", 0, 57], ["Tools", 0, 41], ["Preferences", 1, 89], ["Help", 0, 36.500]];

/* ---------- task bar pictures ---------- */
const WinLogo = () => (
  <svg width="35" height="35" viewBox="0 0 35 35"><defs><linearGradient id="wl" x1="0" y1="0" x2="1" y2="1"><stop offset="0" stopColor="#7cf0ff" /><stop offset="1" stopColor="#0a93f5" /></linearGradient></defs>
    <path d="M0 1q0-1 1-1h16v17H0zM18 0h16q1 0 1 1v16H18zM0 18h17v17H1q-1 0-1-1zM18 18h17v16q0 1-1 1H18z" fill="url(#wl)" /></svg>
);
const Wind = () => (
  <svg width="36" height="28" viewBox="0 0 36 28" fill="none" strokeWidth="3.200" strokeLinecap="round"><path d="M2 12h16a5 5 0 1 0-4-7" stroke="#a9c2e6" /><path d="M2 17h28a4 4 0 1 0-3-6" stroke="#7f9dc9" /><path d="M13 21.500h10a2.300 2.300 0 1 1-1 3.500" stroke="#8fb2de" /><circle cx="19" cy="7" r="4.500" fill="#a9c2e6" /><circle cx="30" cy="13" r="3" fill="#8aa7cf" /></svg>
);
const Spinning = () => (
  <svg width="68" height="34" viewBox="0 0 68 34" fill="none">
    <circle cx="12" cy="13" r="9.500" stroke="#7d82b8" strokeWidth="1.500" />
    <path d="M12 3v20M2 13h20M5 6l14 14M19 6L5 20" stroke="#e0934b" strokeWidth="3" /><path d="M11 13v16M20 12v16" stroke="#a9562a" strokeWidth="2" />
    <path d="M8 30l28-2v2l-4 2H8z" fill="#c8763d" stroke="#a9562a" /><path d="M22 12q6 12 10 13" stroke="#8fa8cf" /><circle cx="32" cy="25" r="3" fill="#9fb5dc" /><path d="M35 25q5-4 8 0" stroke="#74569a" strokeWidth="1.500" />
    <path d="M33 9l9-7q4-2 4 2M53 9l10-5q4-1 3 5" stroke="#c56e2c" strokeWidth="2" />
    <g fill="#7fc3d6" stroke="#e8b128" strokeWidth="2"><circle cx="35" cy="12" r="4.200" /><circle cx="49" cy="12" r="4.200" /></g><path d="M40 12h4" stroke="#e8b128" strokeWidth="2" />
  </svg>
);
const apps = [
  [<svg width="36" height="34" viewBox="0 0 36 34"><rect x="9" y="0" width="27" height="25" rx="1.500" fill="#f4f4f4" /><rect y="9" width="27" height="25" rx="1.500" fill="#646464" /><path d="M9 9h18v16H9z" fill="#b4b4b4" /></svg>],
  [<svg width="34" height="34" viewBox="0 0 34 34"><defs><linearGradient id="ch" x1="0" y1="0" x2="1" y2="1"><stop offset="0" stopColor="#9a66a8" /><stop offset=".5" stopColor="#5d5ec9" /><stop offset="1" stopColor="#5b6bd6" /></linearGradient></defs><path d="M17 0a17 17 0 1 1-8 32L0 34l2-9A17 17 0 0 1 17 0z" fill="url(#ch)" /><rect x="7" y="10" width="14" height="14" rx="3" fill="#fff" /><path d="M22.500 15l4.500-4v12l-4.500-4z" fill="#fff" /></svg>],
  [<svg width="36" height="34" viewBox="0 0 36 34"><path d="M0 2q0-2 2-2h10l3 4h21v12H0z" fill="#e0a004" /><path d="M0 6h12l3-2.500h19q2 0 2 2V33H0z" fill="#ffcf48" /><path d="M6 34V26q0-4 4-4h16q4 0 4 4v8z" fill="#0c6fc2" /><path d="M11 28h14" stroke="#0a4d8c" strokeWidth="1.500" /></svg>],
  [<svg width="36" height="34" viewBox="0 0 36 34"><path d="M0 12L18 0l18 12v6H0z" fill="#0a5ca8" /><path d="M4 11h28v8L18 23 4 19z" fill="#f4f4f4" /><path d="M0 12l18 11L36 12v22H0z" fill="#29a7ec" /><path d="M18 23l18-11v22z" fill="#3cc8f4" /><path d="M0 34l18-11 18 11z" fill="#2196e3" /></svg>],
  [<svg width="30" height="30" viewBox="0 0 30 30"><circle cx="15" cy="15" r="14" fill="#0a86d1" stroke="#fff" strokeWidth="1.800" /><path d="M9.500 19.500L20 10.500" stroke="#fff" strokeWidth="3.400" /><circle cx="9.500" cy="19.500" r="2.600" fill="#0a86d1" stroke="#fff" strokeWidth="1.800" /><circle cx="20" cy="11" r="4" fill="#fff" /><path d="M20.500 10.500L24 5l3 5z" fill="#0a86d1" /></svg>],
  [<svg width="36" height="36" viewBox="0 0 36 36"><defs><linearGradient id="ed" x1="0" y1="0" x2="1" y2=".5"><stop offset="0" stopColor="#1f9fe6" /><stop offset=".55" stopColor="#2cc3d5" /><stop offset="1" stopColor="#6de95f" /></linearGradient></defs><circle cx="18" cy="18" r="18" fill="#0b78d3" /><path d="M0 16A18 18 0 0 1 36 16c0 6-4 8-9 8-4 0-6-1-5-3 3-4 0-9-7-9C7 12 1 14 0 16z" fill="url(#ed)" /><path d="M12 21c0 8 7 12 21 7-5 8-14 9-19 7-7-4-8-15 1-18-2 1-3 2-3 4z" fill="#114a94" /><path d="M15 22c2 6 9 7 19 4l1-3c-5 2-13 2-13-2z" fill="#202128" /></svg>],
  [<svg width="36" height="36" viewBox="0 0 36 36"><circle cx="18" cy="18" r="18" fill="#fcc31e" /><path d="M2.400 9A18 18 0 0 0 18 36l8-13.500-8-4.500-8 4.500z" fill="#2da94f" /><path d="M18 0A18 18 0 0 0 2.400 9l7.800 13.500L18 9h15.600A18 18 0 0 0 18 0z" fill="#e33b2e" /><circle cx="18" cy="18" r="8.500" fill="#fff" /><circle cx="18" cy="18" r="6.700" fill="#2f7bea" /></svg>],
  [<svg width="34" height="34" viewBox="0 0 34 34"><rect width="34" height="34" rx="5" fill="#2b3fc4" /><text x="4" y="27" fontFamily="Open Sans" fontWeight="800" fontSize="26" fill="#fff" textLength="26" lengthAdjust="spacingAndGlyphs">Ki</text><circle cx="26.500" cy="8" r="3.400" fill="#f57f17" /></svg>, "wide", true],
  [<svg width="30" height="36" viewBox="0 0 30 36"><path d="M8 0h14l3 3 3 0 1 6 1 3-4 16q-1 2-3 4l-8 4-8-4q-2-2-3-4L0 12l1-3 1-6h3z" fill="#f9471c" /><path d="M15 6l9 2 2 5-4 6 1 4-6 3 2 2-4 3-4-3 2-2-6-3 1-4-4-6 2-5z" fill="#fff" /><path d="M7 12l5 2-1 3-3-2zM23 12l-5 2 1 3 3-2zM15 12l1 9h-2zM12 23l3 1 3-1" fill="#f9471c" stroke="#f9471c" /></svg>, "dot"],
];

export default function App() {
  return (
    <Screen>
      <Global />
      <TitleBar>
        <AppBadge><Board /></AppBadge>
        <Caption><Text size={17.500} w={222.500}>*electric_lamp — PCB Editor</Text></Caption>
        <WindowButtons>
          <WindowButton><svg width="15" height="2"><path d="M0 1h15" stroke="#000" strokeWidth="1.200" /></svg></WindowButton>
          <WindowButton><svg width="16" height="16" viewBox="0 0 16 16" fill="none" stroke="#000" strokeWidth="1.300"><rect x="1" y="3.500" width="11" height="11" rx="2" /><path d="M4 1h7.500a3 3 0 0 1 3 3v8" /></svg></WindowButton>
          <WindowButton><svg width="16" height="16" viewBox="0 0 16 16"><path d="M.7.7l14.600 14.600M15.300.7L.7 15.300" stroke="#000" strokeWidth="1.300" /></svg></WindowButton>
        </WindowButtons>
      </TitleBar>
      <MenuBar>{menus.map(([t, mn, w]) => <Text key={t} mn={mn} w={w}>{t}</Text>)}</MenuBar>
      <TopTools>
        <Tools items={["save", "|"]} />
        <ToolButton><Board gear /></ToolButton>
        <Tools items={["|", "page", "print", "plot", "|", "undo", "redo:off", "|", "find", "|", "refresh", "zin", "zout", "zfit", "zobj", "zsel", "|", "ccw", "cw", "flv", "mir", "group:off", "ungroup:off", "lock", "unlock:off", "|", "fped", "lib", "|", "upd", "drc", "|"]} />
        <Combo $w={182} $hgt={32} $m="0 -3px 0 2px" $pl={8} $pr={7} $dark><ComboValue><i /><Text w={92}>F.Cu (PgUp)</Text></ComboValue><Chevron /></Combo>
        <Tools items={["pair", "|", "sch", "|", "con"]} />
      </TopTools>
      <SecondTools>
        <Combo $w={229} $pl={2} $pt={2}><Text w={191}>Track: use netclass width</Text><Chevron /></Combo>
        <WidthToggle><Tools items={["width:on"]} /></WidthToggle>
        <Rule />
        <Combo $w={219} $m="0 4px 0 4px" $pt={2}><Text w={169}>Via: use netclass sizes</Text><Chevron /></Combo>
        <Rule />
        <Combo $w={296} $m="0 4px 0 4px" $pt={2}><Text w={221}>Grid: 2.5400 mm (0.1000 in)</Text><Chevron /></Combo>
        <Rule />
        <Combo $w={144} $m="0 0 0 4px" $pt={2}><Text w={86.500}>Zoom 2.20</Text><Chevron /></Combo>
      </SecondTools>

      <Main>
        <LeftTools><Tools h items={["grid:on", "polar"]} />
          <ToolButton><UnitIcon t="in" w="11" /></ToolButton><ToolButton><UnitIcon t="mil" w="17" /></ToolButton><ToolButton $on><UnitIcon t="mm" w="22" /></ToolButton>
          <Tools h items={["cursor", "|", "angle", "|", "rats:on", "rats2", "|", "nets", "hc:off", "|", "zone:on", "zoneOut", "|", "padOut", "viaOut", "trkOut", "|"]} />
        </LeftTools>
        <CanvasFrame><BoardView /></CanvasFrame>
        <LeftTools>
          <Tools h items={["arrow:on", "local", "|", "fp", "route:more", "tune:more", "via", "zoneFill", "keep", "|", "line", "arc", "rect", "circ", "poly", "img", "text", "tbox", "dim:more"]} />
        </LeftTools>
        <Sash />
        <SidePanel>
          <PanelTitle><Text size={17} w={94}>Appearance</Text></PanelTitle>
          <TabRow>
            <Tab $on $w={75}><Text size={16.500} w={48}>Layers</Text></Tab>
            <Tab $w={46}><Text size={16.500} w={57}>Objects</Text></Tab>
            <TabArrow><svg width="6" height="11"><path d="M6 0v11L0 5.500z" /></svg></TabArrow>
            <TabArrow><svg width="6" height="11"><path d="M0 0v11l6-5.500z" /></svg></TabArrow>
          </TabRow>
          <Page>
            <LayerArea>
              <LayerList>
                {layers.map(([n, c, w], i) => (
                  <LayerRow key={n} $on={i === 0}>
                    <span>{i === 0 && <RowArrow><path d="M5 0v9l5-4.500z" fill="#4545ff" /></RowArrow>}</span>
                    <Swatch $c={c} /><Eye /><Text size={15} w={w}>{n}</Text>
                  </LayerRow>
                ))}
              </LayerList>
              <ScrollTrack><ScrollThumb /></ScrollTrack>
            </LayerArea>
            <DisplayOptions><svg width="6" height="11"><path d="M0 0v11l6-5.500z" /></svg><Text size={15} w={148}>Layer Display Options</Text></DisplayOptions>
          </Page>
          <FieldLabel $hgt={31}><Text size={15} w={126}>Presets (Ctrl+Tab):</Text></FieldLabel>
          <Combo $w={166} $m="2px 0 0 7px"><Text size={17} w={74}>All Layers</Text><Chevron /></Combo>
          <FieldLabel $hgt={26}><Text size={15} w={153}>Viewports (Shift+Tab):</Text></FieldLabel>
          <Combo $w={166} $m="2px 0 0 7px"><Text size={17} w={21}>---</Text><Chevron /></Combo>
          <PanelSash />
          <PanelTitle><Text size={17} w={114}>Selection Filter</Text></PanelTitle>
          <Filters>
            {filters.map(([n, w, on]) => (
              <Check key={n}><Box $on={on}>{on ? <svg width="11" height="8" viewBox="0 0 11 8"><path d="M1 4l3 3 6-6" fill="none" stroke="#dcecff" strokeWidth="1.100" /></svg> : null}</Box><Text size={15} w={w}>{n}</Text></Check>
            ))}
          </Filters>
        </SidePanel>
      </Main>

      <MessagePanel>{message.map(([t, w]) => <Text key={t} size={17} w={w}>{t}</Text>)}</MessagePanel>
      <StatusBar>{status.map(([cw, pl, t, w]) => <StatusCell key={t} $w={cw} $pl={pl}><Text size={17} w={w}>{t}</Text></StatusCell>)}</StatusBar>

      <TaskBar>
        <Weather><Wind /><Stack><Text size={16.500} w={38} color="#fff">24°C</Text><Text size={16.500} w={52} color="#cfcfd4">Windy</Text></Stack></Weather>
        <WinLogo />
        <SearchBox>
          <svg width="24" height="26" viewBox="0 0 24 26" fill="none" stroke="#e4e4e4" strokeWidth="2.400"><circle cx="11" cy="11" r="8.500" /><path d="M16.500 17l6 7" strokeWidth="3" /></svg>
          <SearchLabel><Text size={18.500} w={62} color="#d6d6d6">Search</Text></SearchLabel>
          <Spinning />
        </SearchBox>
        {apps.map(([icon, mark, on], i) => <TaskCell key={i} $mark={mark} $on={on}>{icon}</TaskCell>)}
        <Tray>
          <TrayCell $w={48}><svg width="16" height="10" viewBox="0 0 16 10"><path d="M1 9l7-7.500L15 9" fill="none" stroke="#fff" strokeWidth="1.700" /></svg></TrayCell>
          <TrayCell $w={48}><svg width="26" height="20" viewBox="0 0 26 20"><path d="M6 17a5 5 0 0 1-1-9.500A6.500 6.500 0 0 1 17 6a5 5 0 0 1 3 11z" fill="#8d8d90" /><path d="M4 0l18 19" stroke="#ddd" strokeWidth="1.500" /></svg></TrayCell>
          <TrayCell $w={66}><Stack $a="center"><Text size={16} w={34} color="#fff">ENG</Text><Text size={16} w={18} color="#fff">IN</Text></Stack></TrayCell>
          <TrayCell $w={48}><svg width="24" height="20" viewBox="0 0 24 20" fill="none" stroke="#fff" strokeWidth="1.600"><path d="M1 7.500a15.500 15.500 0 0 1 22 0M4.500 11a10.500 10.500 0 0 1 15 0M8 14.500a5.700 5.700 0 0 1 8 0" /><circle cx="12" cy="17.500" r="1.600" fill="#fff" stroke="none" /></svg></TrayCell>
          <TrayCell $w={24}><svg width="24" height="20" viewBox="0 0 25 20" fill="none" stroke="#fff" strokeWidth="1.500"><path d="M1 7v6h4l6 5V2L5 7zM14.500 6.500q2.500 3.500 0 7M18 4q4.500 6 0 12M21.500 1.500q6 8.500 0 17" /></svg></TrayCell>
          <TrayCell $w={48}><svg width="24" height="22" viewBox="0 0 24 22"><rect x="2" y="6.500" width="18" height="12" rx="2.500" fill="none" stroke="#fff" strokeWidth="1.600" /><path d="M11 9h6.500v7H5v-3h4z" fill="#fff" /><path d="M21 10h2v5h-2z" fill="#fff" /><path d="M6 0L1 9h4l-2 7 7-9H6l2-7z" fill="#fff" stroke="#1f1e2c" /></svg></TrayCell>
          <TrayCell $w={106} $j="flex-end"><Stack $a="flex-end"><Text size={16.500} w={43} color="#fff">11:01</Text><Text size={16.500} w={93} color="#fff">02-10-2023</Text></Stack></TrayCell>
          <Badge><Text size={14} color="#10202c">3</Text></Badge>
        </Tray>
      </TaskBar>
    </Screen>
  );
}
